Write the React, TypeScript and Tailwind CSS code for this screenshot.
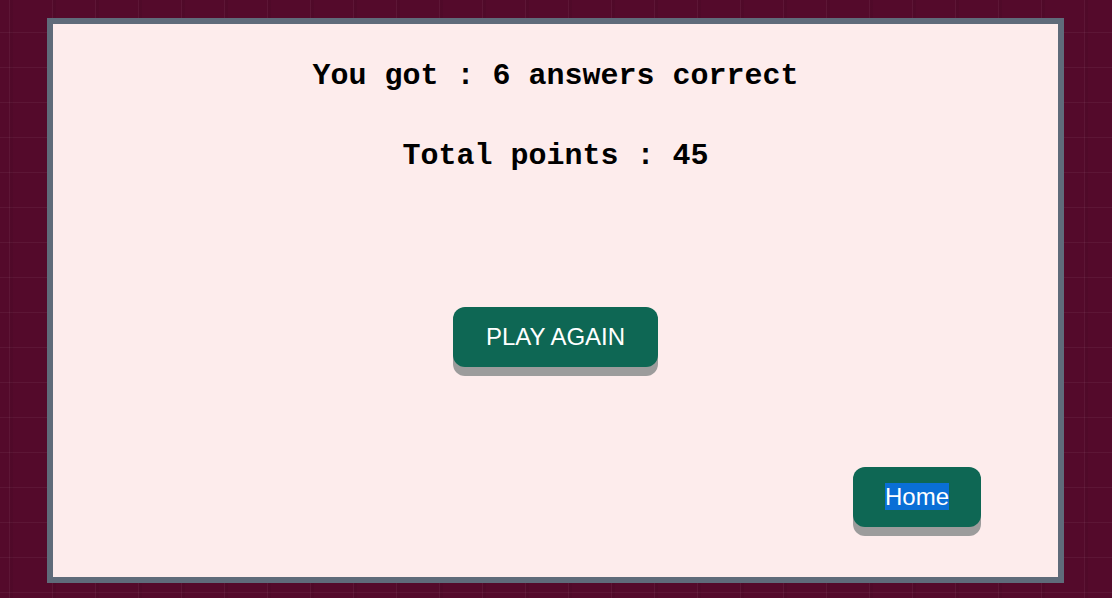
import React from "react";

export default function App() {
  return (
    <div
      className="w-[1112px] h-[598px] bg-[#540a2b] pt-[18px] pl-[47px] overflow-hidden"
      style={{
        backgroundImage:
          "repeating-linear-gradient(90deg, transparent 0px, transparent 9px, rgba(255,255,255,0.05) 9px, rgba(255,255,255,0.05) 10px, rgba(0,0,0,0.05) 10px, rgba(0,0,0,0.05) 13px, transparent 13px, transparent 43px), repeating-linear-gradient(0deg, transparent 0px, transparent 5px, rgba(255,255,255,0.05) 5px, rgba(255,255,255,0.05) 6px, transparent 6px, transparent 35px)",
      }}
    >
      <div className="w-[1017px] h-[565px] border-[6px] border-[#5f6b7a] bg-[#fdecec] flex flex-col items-center pt-[35px]">
        <p className="font-['Liberation_Mono','Courier_New',monospace] font-bold text-[30px] leading-[34px] text-black">
          You got : 6 answers correct
        </p>
        <p className="mt-[46px] font-['Liberation_Mono','Courier_New',monospace] font-bold text-[30px] leading-[34px] text-black">
          Total points : 45
        </p>
        <button className="mt-[134px] h-[60px] w-[205px] rounded-[12px] bg-[#0e6754] text-white text-[24px] leading-[28px] font-['Liberation_Sans',Arial,sans-serif] shadow-[0_9px_0_#9c9c9c]">
          PLAY AGAIN
        </button>
        <button className="mt-[100px] self-end mr-[77px] h-[60px] w-[128px] rounded-[12px] bg-[#0e6754] text-white text-[24px] leading-[28px] font-['Liberation_Sans',Arial,sans-serif] shadow-[0_9px_0_#9c9c9c]">
          <span className="bg-[#0a6fd6] text-white">Home</span>
        </button>
      </div>
    </div>
  );
}
